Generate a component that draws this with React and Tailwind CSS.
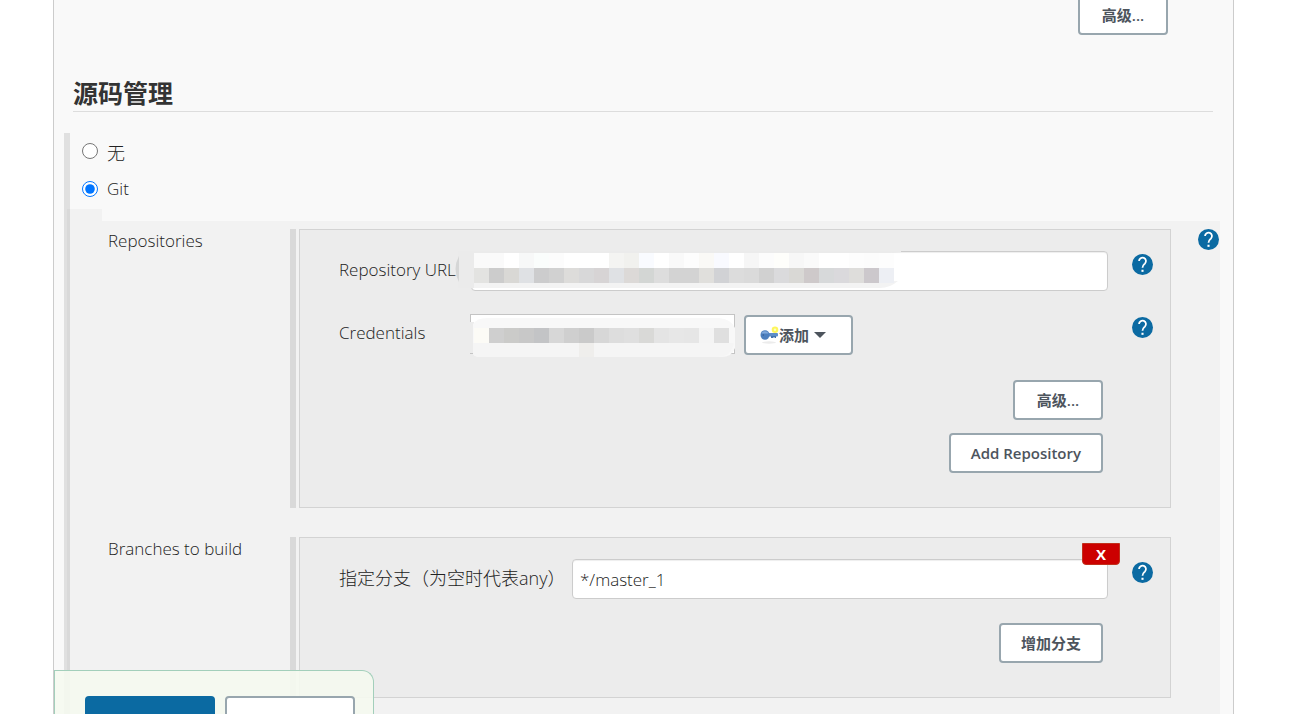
import React from 'react';

const URL_ROWS = [
    ['#fafafa', '#fafafa', '#ffffff', '#f7f8f8', '#fafdfc', '#fcfcfc', '#ffffff', '#ffffff', '#ffffff', '#f4f4f2', '#f1f1ee', '#f9fbff', '#ffffff', '#f9f9f9', '#fdfdfd', '#faf9f6', '#f9faff', '#ffffff', '#f6f6f6', '#fcfcfc', '#fefefb', '#f7f7f7', '#fafafa', '#ffffff', '#ffffff', '#fdfdfd', '#fcfcfc', '#fdfdfd'],
    ['#e3e3e1', '#cccccc', '#d9d8d5', '#dfe1e4', '#cccccd', '#d1d1d1', '#dddcda', '#d8d8d9', '#d7d4d5', '#dfe1e4', '#dcd9d7', '#d3d6d4', '#dddddd', '#d3d3d3', '#d3d3d3', '#e0dfdc', '#d1d2d5', '#dcdcdc', '#dadada', '#d1d1d1', '#dadadc', '#d9d8d5', '#cec9ca', '#d7d9da', '#dad9dc', '#dedddb', '#ccc8cc', '#edeff4'],
];

const CREDENTIAL_ROW = ['#fcfbf6', '#cfcfcf', '#cbcbc9', '#c8c8c8', '#c3c4c6', '#d7d7d7', '#cfcfcf', '#cacaca', '#d7d7d7', '#dddddd', '#dfdfdf', '#d9d9d7', '#e4e4e4', '#e7e7e7', '#e6e6e6', '#f4f4f4', '#dfdfdf'];

const HelpIcon = () => (
    <a href="#help" aria-label="Help" className="block shrink-0">
        <svg viewBox="2 2 20 20" className="w-[21px] h-[21px]">
            <circle cx="12" cy="12" r="10" fill="#0b6aa2" />
            <path d="M8.700 8.700a3.300 3.300 0 1 1 5.600 2.400c-1.300 1.200-2.300 1.900-2.300 3.900" fill="none" stroke="#fff" strokeWidth="1.700" />
            <rect x="11" y="17" width="2" height="2" fill="#fff" />
        </svg>
    </a>
);

const KeyIcon = () => (
    <svg viewBox="0 0 20 20" className="w-5 h-5 shrink-0">
        <ellipse cx="10" cy="17.500" rx="7" ry="1.200" fill="#ececec" />
        <rect x="8" y="8" width="11" height="3.500" rx="1" fill="#5d8dc9" />
        <path d="M12 11h5v2h-1.500v-1h-1v1H12z" fill="#4272ae" />
        <ellipse cx="6" cy="10" rx="4.500" ry="4.800" fill="#4d7fbe" />
        <path d="M2.500 8.500a3.600 3 0 0 1 7 0z" fill="#80a9dc" />
        <circle cx="4.300" cy="10" r="0.800" fill="#365f94" />
        <circle cx="16" cy="4.800" r="3.300" fill="#fdf65c" />
        <circle cx="16" cy="4.800" r="1.200" fill="#fffcc4" />
    </svg>
);

const Button = ({ children, className = 'min-w-[90px] px-5' }) => (
    <button
        type="button"
        className={`h-10 flex items-center justify-center rounded border-2 border-[#98a6ae] bg-white text-[15px] font-semibold text-[#4d545d] whitespace-nowrap ${className}`}>
        {children}
    </button>
);

const Panel = ({ label, className, children, help }) => (
    <div className="flex items-start">
        <div className="w-[182px] shrink-0 leading-6">{label}</div>
        <div className="flex-1 border-l-6 border-[#d9d9d9] pl-[3px]">
            <div className={`relative border border-[#d3d3d3] bg-[#ececec] pl-[39px] pr-[17px] ${className}`}>
                {children}
            </div>
        </div>
        <div className="w-[49px] shrink-0 flex justify-end pr-px">{help && <HelpIcon />}</div>
    </div>
);

const INPUT = 'h-10 min-w-0 rounded border border-[#ccc] bg-white px-[7px] outline-none shadow-[inset_0_1px_1px_rgba(0,0,0,0.07)]';

const UrlMosaic = () => (
    <svg viewBox="0 0 448 40" className="absolute -left-4 top-0 w-[448px] h-10 pointer-events-none">
        <path d="M0 0h446v1q-6 1-12 1H19v35H3V0z" fill="#ebebeb" />
        <path d="M4 5q-7 13 0 26z" fill="#d5d6d6" />
        <path d="M19 30h424q-8 7-18 7H19z" fill="#f3f3f3" />
        {URL_ROWS.map((row, y) => row.map((fill, x) => (
            <rect key={`${x}-${y}`} x={19 + x * 15} y={2 + y * 15} width="15" height="15" fill={fill} />
        )))}
    </svg>
);

const CredentialMosaic = () => (
    <svg viewBox="0 0 268 44" className="absolute left-0 top-0 w-[268px] h-11 pointer-events-none">
        <path d="M0 8h4v31H0z" fill="#ececec" />
        <path d="M3 10q4-6 14-6h232q12 1 16 10v20q-3 9-14 9H11q-8 0-8-4z" fill="#f8f8f8" />
        <path d="M3 29h261q-3 14-16 14H11q-8 0-8-4z" fill="#f5f5f5" />
        <path d="M109 29h15v14h-15z" fill="#efeeec" />
        {CREDENTIAL_ROW.map((fill, x) => (
            <rect key={x} x={4 + x * 15} y="14" width="15" height="15" fill={fill} />
        ))}
    </svg>
);

const App = () => (
    <div className="h-screen overflow-hidden bg-white text-[17px] font-light text-[#222] font-['Open_Sans','Noto_Sans_CJK_SC',sans-serif]">
        <main className="min-h-full ml-[53px] mr-[72px] border-x border-[#ccc] bg-[#f9f9f9]">
            <div className="h-[35px] flex items-end justify-end pr-[65px]">
                <Button>高级...</Button>
            </div>

            <h2 className="ml-[19px] mr-5 mt-10 h-[37px] border-b border-[#ddd] text-[25px] leading-9 font-bold text-[#333]">源码管理</h2>

            <div className="ml-[10px] mr-[13px] mt-[21px] border-l-6 border-[#e0e0e0]">
                <div className="h-[76px] pl-3 flex flex-col">
                    <label className="h-9 flex items-center gap-[9px] text-lg">
                        <input type="radio" name="scm" className="w-4 h-4" />
                        <span className="pt-[3px]">无</span>
                    </label>
                    <label className="h-10 flex items-center gap-[9px]">
                        <input type="radio" name="scm" defaultChecked className="w-4 h-4" />
                        <span>Git</span>
                    </label>
                </div>

                <div className="relative -ml-[3px] w-[35px] h-3 bg-black/[2.8%]" />
                <div className="relative -ml-[3px] pl-[41px] pt-2 pb-10 bg-black/[2.8%] flex flex-col gap-[29px]">
                    <Panel label="Repositories" className="h-[279px] pt-[21px]" help>
                        <div className="flex items-start">
                            <label htmlFor="url" className="w-[132px] shrink-0 leading-[38px]">Repository URL</label>
                            <div className="relative flex-1 flex">
                                <input id="url" type="text" className={`${INPUT} flex-1`} />
                                <UrlMosaic />
                            </div>
                            <div className="w-[45px] pt-[3px] flex justify-end"><HelpIcon /></div>
                        </div>
                        <div className="mt-[23px] flex items-start">
                            <label htmlFor="credentials" className="w-[131px] shrink-0 leading-[38px]">Credentials</label>
                            <div className="relative">
                                <select id="credentials" className="block w-[265px] h-10 appearance-none border border-[#c4c4c4] bg-white">
                                    <option></option>
                                </select>
                                <CredentialMosaic />
                            </div>
                            <div className="ml-[9px] mt-px">
                                <Button className="w-[109px] pr-3">
                                    <KeyIcon />
                                    添加
                                    <svg viewBox="0 0 12 6" className="ml-[5px] w-3 h-[6px]"><path d="M0 0h12L6 6z" fill="#4d545d" /></svg>
                                </Button>
                            </div>
                            <div className="ml-auto pt-[3px]"><HelpIcon /></div>
                        </div>
                        <div className="mt-[25px] pr-[50px] flex flex-col items-end gap-[13px]">
                            <Button>高级...</Button>
                            <Button>Add Repository</Button>
                        </div>
                    </Panel>

                    <Panel label="Branches to build" className="h-[161px] pt-[21px]">
                        <div className="flex items-start">
                            <label htmlFor="branch" className="w-[233px] shrink-0 text-lg leading-[38px] whitespace-nowrap">指定分支（为空时代表any）</label>
                            <input id="branch" type="text" defaultValue="*/master_1" className={`${INPUT} flex-1`} />
                            <div className="w-[45px] pt-[3px] flex justify-end"><HelpIcon /></div>
                        </div>
                        <button
                            type="button"
                            className="absolute top-[5px] right-[50px] w-[38px] h-[22px] rounded-b border border-[#c1301c] bg-[#cc0000] text-white text-[15px] leading-5 font-bold">
                            X
                        </button>
                        <div className="mt-6 pr-[50px] flex justify-end">
                            <Button>增加分支</Button>
                        </div>
                    </Panel>
                </div>
            </div>
        </main>

        <div className="fixed left-[54px] bottom-0 h-11 overflow-hidden rounded-tr-xl border border-b-0 border-[#a3cfbb] bg-[#f5f9ef]/90 pt-[25px] pl-[30px] pr-[18px] flex items-start gap-[10px]">
            <button type="button" aria-label="保存" className="w-[130px] h-10 shrink-0 rounded bg-[#0b6aa2]" />
            <button type="button" aria-label="应用" className="w-[130px] h-10 shrink-0 rounded border-2 border-[#98a6ae] bg-white" />
        </div>
    </div>
);

export default App;
